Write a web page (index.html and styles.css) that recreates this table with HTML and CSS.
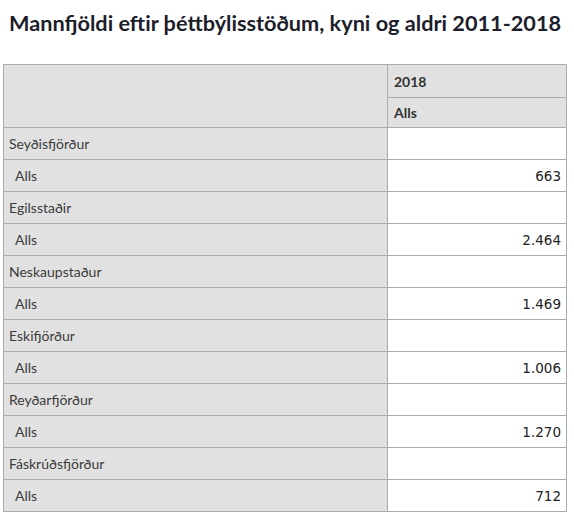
FILE: index.html
```html
<!DOCTYPE html>
<html lang="is">
<head>
  <meta charset="UTF-8">
  <meta name="viewport" content="width=device-width, initial-scale=1">
  <title>Mannfjöldi eftir þéttbýlisstöðum</title>
  <link rel="stylesheet" href="styles.css">
</head>
<body>
  <h1 class="title">Mannfjöldi eftir þéttbýlisstöðum, kyni og aldri 2011-2018</h1>

  <table class="pivot">
    <thead>
      <tr>
        <th class="corner" rowspan="2"></th>
        <th class="col-head">2018</th>
      </tr>
      <tr>
        <th class="col-head">Alls</th>
      </tr>
    </thead>
    <tbody>
      <tr class="group"><th class="row-head">Seyðisfjörður</th><td></td></tr>
      <tr><th class="row-head sub">Alls</th><td class="num">663</td></tr>
      <tr class="group"><th class="row-head">Egilsstaðir</th><td></td></tr>
      <tr><th class="row-head sub">Alls</th><td class="num">2.464</td></tr>
      <tr class="group"><th class="row-head">Neskaupstaður</th><td></td></tr>
      <tr><th class="row-head sub">Alls</th><td class="num">1.469</td></tr>
      <tr class="group"><th class="row-head">Eskifjörður</th><td></td></tr>
      <tr><th class="row-head sub">Alls</th><td class="num">1.006</td></tr>
      <tr class="group"><th class="row-head">Reyðarfjörður</th><td></td></tr>
      <tr><th class="row-head sub">Alls</th><td class="num">1.270</td></tr>
      <tr class="group"><th class="row-head">Fáskrúðsfjörður</th><td></td></tr>
      <tr><th class="row-head sub">Alls</th><td class="num">712</td></tr>
    </tbody>
  </table>
</body>
</html>
```

FILE: styles.css
```css
body {
  margin: 0;
  padding: 0 3px;
  font-family: Lato, 'Open Sans', sans-serif;
  background: white;
  color: #333;
}

.title {
  margin: 0;
  padding: 10px 0 0 6px;
  height: 55px;
  box-sizing: border-box;
  font-size: 21.7px;
  font-weight: bold;
  color: #1d1d2b;
  white-space: nowrap;
}

.pivot {
  margin-top: 9px;
  width: 564px;
  border-collapse: collapse;
  font-size: 14px;
}

.pivot th,
.pivot td {
  border: 1px solid #ababab;
  padding: 0 6px;
  height: 31px;
  box-sizing: border-box;
  text-align: left;
  font-weight: normal;
}

.pivot th {
  background-color: #e1e1e1;
}

.pivot .corner {
  width: 384px;
}

.pivot .col-head {
  font-weight: bold;
  font-size: 14px;
  color: #333;
}

.pivot thead tr:first-child .col-head {
  height: 33px;
}

.pivot thead tr:last-child .col-head {
  height: 30px;
}

.pivot tbody th,
.pivot tbody td {
  height: 32px;
}

.pivot .row-head {
  padding-left: 5px;
  color: #3c3c3c;
}

.pivot .row-head.sub {
  padding-left: 11px;
}

.pivot td {
  background-color: white;
}

.pivot .num {
  text-align: right;
  font-family: 'DejaVu Sans', Verdana, sans-serif;
  font-size: 13.5px;
  color: #222;
  padding-right: 5px;
}
```
